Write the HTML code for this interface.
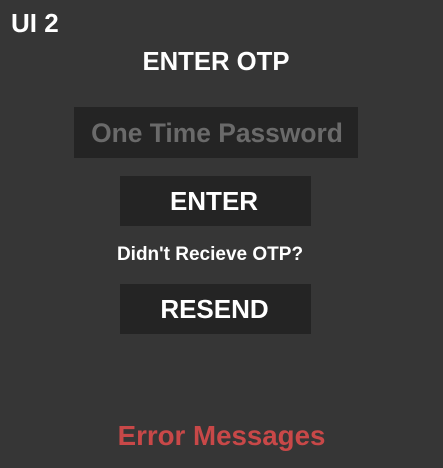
<!DOCTYPE html>
<html><head><meta charset="utf-8"><style>
html,body{margin:0;padding:0;}
body{width:443px;height:468px;background:#363636;position:relative;overflow:hidden;font-family:"Liberation Sans",sans-serif;font-weight:bold;color:#fff;}
.t{position:absolute;left:0;width:443px;text-align:center;white-space:nowrap;}
.box{position:absolute;background:#242424;}
</style></head><body>
<div class="t" style="left:11px;width:auto;top:8px;font-size:26px;line-height:30px;text-align:left;">UI 2</div>
<div class="t" style="top:47px;font-size:25.7px;line-height:30px;left:-5.5px;">ENTER OTP</div>
<div class="box" style="left:74px;top:107px;width:284px;height:51px;"></div>
<div class="t" style="top:116px;font-size:26.4px;line-height:34px;color:#6a6a6a;left:-4.5px;">One Time Password</div>
<div class="box" style="left:120px;top:176px;width:191px;height:50px;"></div>
<div class="t" style="top:185px;font-size:26px;line-height:32px;left:-7.5px;">ENTER</div>
<div class="t" style="top:244px;font-size:19px;line-height:22px;left:-11.5px;">Didn't Recieve OTP?</div>
<div class="box" style="left:120px;top:284px;width:191px;height:50px;"></div>
<div class="t" style="top:293px;font-size:26px;line-height:32px;left:-7px;">RESEND</div>
<div class="t" style="top:420px;font-size:27.7px;line-height:32px;color:#c84848;left:0px;">Error Messages</div>
</body></html>
